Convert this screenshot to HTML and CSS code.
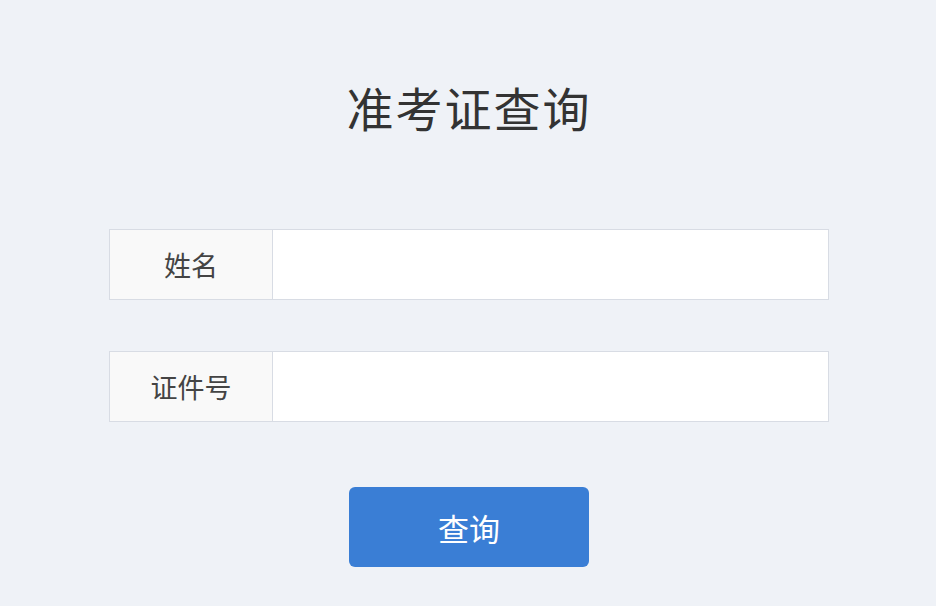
FILE: index.html
```html
<!DOCTYPE html>
<html lang="zh">
<head>
<meta charset="utf-8">
<link rel="stylesheet" href="styles.css">
</head>
<body>
<main class="page">
  <h1 class="title">准考证查询</h1>
  <form class="form">
    <div class="row">
      <label class="label">姓名</label>
      <input class="input" type="text">
    </div>
    <div class="row">
      <label class="label">证件号</label>
      <input class="input" type="text">
    </div>
    <button class="btn" type="button">查询</button>
  </form>
</main>
</body>
</html>
```
FILE: styles.css
```css
html, body {
  margin: 0;
  padding: 0;
  background: #eff2f7;
  font-family: "Noto Sans CJK SC", "Microsoft YaHei", sans-serif;
}
.page {
  width: 936px;
  height: 606px;
  display: flex;
  flex-direction: column;
  align-items: center;
  padding-top: 74px;
  box-sizing: border-box;
}
.title {
  margin: 0;
  font-size: 47px;
  font-weight: 400;
  color: #333;
  line-height: 66px;
  letter-spacing: 2px;
  padding-left: 2px;
}
.form {
  margin-top: 89px;
  padding-left: 2px;
  display: flex;
  flex-direction: column;
  align-items: center;
}
.row {
  width: 720px;
  height: 71px;
  display: flex;
  border: 1px solid #d8dce4;
  box-sizing: border-box;
  background: #fff;
  margin-bottom: 51px;
}
.label {
  width: 162px;
  flex: none;
  background: #f9f9f9;
  border-right: 1px solid #d8dce4;
  display: flex;
  align-items: center;
  justify-content: center;
  font-size: 27px;
  color: #444;
}
.input {
  flex: 1;
  border: none;
  outline: none;
  background: #fff;
  font-size: 24px;
  padding: 0 16px;
}
.btn {
  margin-top: 14px;
  width: 240px;
  height: 80px;
  border: none;
  border-radius: 6px;
  background: #3a7ed5;
  color: #fff;
  font-family: inherit;
  font-size: 31px;
}
```
